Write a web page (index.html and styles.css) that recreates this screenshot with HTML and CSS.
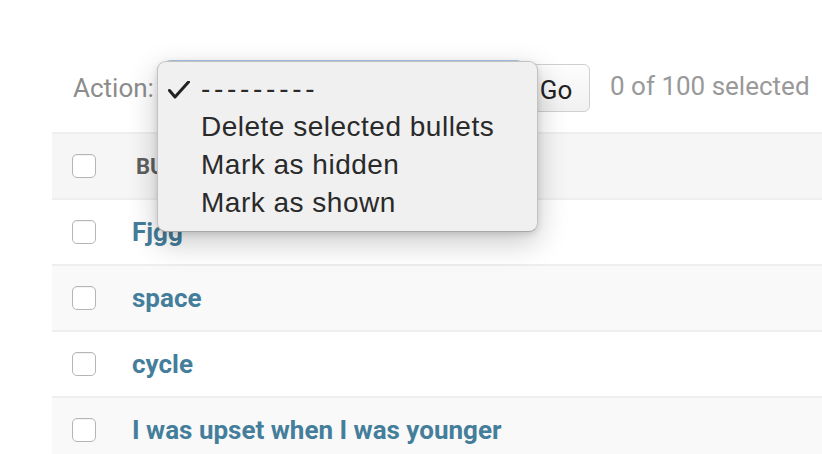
FILE: index.html
```html
<!DOCTYPE html>
<html>
<head>
<meta charset="utf-8">
<link rel="stylesheet" href="styles.css">
</head>
<body>
<div class="page">
  <div class="actions">
    <label class="action-label">Action:</label>
    <div class="select-box"></div>
    <button class="go-btn">Go</button>
    <span class="counter">0 of 100 selected</span>
  </div>
  <div class="table">
    <div class="row head">
      <div class="cell-check"><span class="cb"></span></div>
      <div class="cell-text head-text">BULLET</div>
    </div>
    <div class="row">
      <div class="cell-check"><span class="cb"></span></div>
      <div class="cell-text"><a class="link">Fjgg</a></div>
    </div>
    <div class="row alt">
      <div class="cell-check"><span class="cb"></span></div>
      <div class="cell-text"><a class="link">space</a></div>
    </div>
    <div class="row">
      <div class="cell-check"><span class="cb"></span></div>
      <div class="cell-text"><a class="link">cycle</a></div>
    </div>
    <div class="row alt">
      <div class="cell-check"><span class="cb"></span></div>
      <div class="cell-text"><a class="link">I was upset when I was younger</a></div>
    </div>
  </div>
  <div class="menu">
    <div class="item"><span class="check"><svg width="22" height="18" viewBox="0 0 22 18"><path d="M1.5 9.5 L7 16 L20.5 1" fill="none" stroke="#222" stroke-width="3" stroke-linecap="round" stroke-linejoin="round"/></svg></span><span class="item-text dashes">---------</span></div>
    <div class="item"><span class="check"></span><span class="item-text">Delete selected bullets</span></div>
    <div class="item"><span class="check"></span><span class="item-text">Mark as hidden</span></div>
    <div class="item"><span class="check"></span><span class="item-text">Mark as shown</span></div>
  </div>
</div>
</body>
</html>
```

FILE: styles.css
```css
html, body {
  margin: 0;
  padding: 0;
  background: #fff;
  overflow: hidden;
}
.page {
  position: relative;
  width: 822px;
  height: 454px;
  overflow: hidden;
  font-family: Roboto, "Liberation Sans", sans-serif;
}
.actions {
  display: flex;
  align-items: center;
  height: 48px;
  padding: 64px 0 0 73px;
  margin-bottom: 20px;
}
.action-label {
  font-size: 26px;
  color: #8c8c8c;
  width: 92px;
}
.select-box {
  width: 355px;
  height: 46px;
  margin-top: -4px;
  border-radius: 6px;
  border: 1px solid #ccc;
  box-shadow: 0 0 0 2px #a9c6ea;
}
.go-btn {
  margin-left: 0;
  width: 68px;
  height: 48px;
  border: 1px solid #d0d0d0;
  border-radius: 6px;
  background: linear-gradient(#fdfdfd, #f1f1f1);
  font-family: Roboto, sans-serif;
  font-size: 26px;
  color: #222;
  padding: 4px 0 0 0;
}
.counter {
  margin-left: 20px;
  font-size: 26px;
  color: #999;
  margin-top: -4px;
}
.table {
  margin-left: 52px;
  width: 800px;
}
.row {
  display: flex;
  align-items: center;
  height: 64px;
  border-bottom: 2px solid #eee;
  background: #fff;
}
.row.alt {
  background: #f9f9f9;
}
.row.head {
  background: #f6f6f6;
  border-top: 2px solid #eee;
}
.cell-check {
  width: 80px;
  display: flex;
  align-items: center;
}
.cb {
  display: block;
  margin-left: 20px;
  width: 22px;
  height: 22px;
  border: 1px solid #b5b5b5;
  border-radius: 5px;
  background: #fff;
  box-shadow: inset 0 1px 1px rgba(0,0,0,0.05);
}
.cell-text {
  font-size: 26px;
}
.head-text {
  font-size: 22px;
  font-weight: 700;
  color: #5f5f5f;
  padding-left: 4px;
}
.link {
  color: #447e9b;
  font-weight: 700;
  text-decoration: none;
}
.menu {
  position: absolute;
  left: 157px;
  top: 61px;
  width: 379px;
  padding: 8px 0 9px 0;
  background: #f0f0f0;
  border: 1px solid #c2c2c2;
  border-bottom-color: #a8a8a8;
  border-radius: 9px;
  box-shadow: 0 10px 30px rgba(0,0,0,0.22), 0 2px 6px rgba(0,0,0,0.12);
}
.item {
  display: flex;
  align-items: center;
  height: 38px;
  font-family: "Liberation Sans", Arial, sans-serif;
  font-size: 28px;
  letter-spacing: 0.5px;
  color: #2a2a2a;
}
.dashes {
  letter-spacing: 3.7px;
}
.check {
  width: 43px;
  padding-left: 10px;
  box-sizing: border-box;
  display: flex;
  align-items: center;
}
.check svg {
  display: block;
  margin-top: 2px;
}
```
